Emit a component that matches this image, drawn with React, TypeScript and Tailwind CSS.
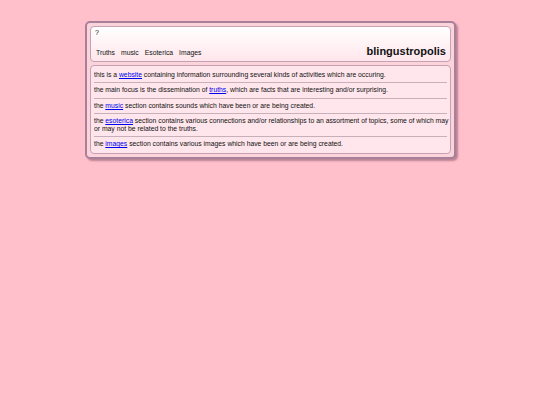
export default function App() {
  const rows: React.ReactNode[] = [
    <>this is a <a className="text-[#0000ee] underline" href="#">website</a> containing information surrounding several kinds of activities which are occuring.</>,
    <>the main focus is the dissemination of <a className="text-[#0000ee] underline" href="#">truths</a>, which are facts that are interesting and/or surprising.</>,
    <>the <a className="text-[#0000ee] underline" href="#">music</a> section contains sounds which have been or are being created.</>,
    <>the <a className="text-[#0000ee] underline" href="#">esoterica</a> section contains various connections and/or relationships to an assortment of topics, some of which may or may not be related to the truths.</>,
    <>the <a className="text-[#0000ee] underline" href="#">images</a> section contains various images which have been or are being created.</>,
  ];
  return (
    <div className="min-h-[405px] w-full bg-[#ffc0cb] pt-[21px] font-['Liberation_Sans',Arial,sans-serif] text-[#111]">
      <div className="ml-[85px] w-[371px] rounded-[5px] border-2 border-[#a8809a] bg-[#fbd3db] p-[3px] shadow-[2px_2px_2px_rgba(120,70,90,0.5)]">
        <div className="flex h-[36px] flex-col justify-between rounded-[4px] border border-[#c8a0b4] bg-gradient-to-b from-white to-[#ffe6ec] px-[4px] pb-[4px] pt-[1px]">
          <div className="text-[7px] leading-[10px]">?</div>
          <div className="flex items-end justify-between">
            <div className="flex gap-[6px] pl-[1px] text-[6.8px] leading-[9px]">
              <span>Truths</span>
              <span>music</span>
              <span>Esoterica</span>
              <span>Images</span>
            </div>
            <div className="text-[11px] font-bold leading-[12px]">blingustropolis</div>
          </div>
        </div>
        <div className="mt-[3px] rounded-[4px] border border-[#c8a0b4] bg-[#ffe6ec] px-[3px] py-[2px]">
          {rows.map((r, i) => (
            <div
              key={i}
              className={`py-[3.125px] text-[6.8px] leading-[8px] ${i < rows.length - 1 ? "border-b border-[#c8b0b8]" : ""}`}
            >
              <div className="-mr-[8px]">{r}</div>
            </div>
          ))}
        </div>
      </div>
    </div>
  );
}
